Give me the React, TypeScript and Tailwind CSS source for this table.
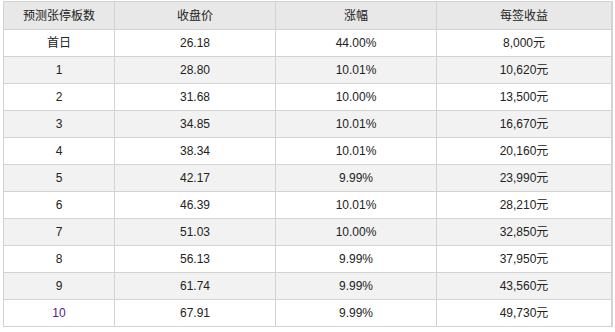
import React from "react";

const rows: [string, string, string, string][] = [
  ["首日", "26.18", "44.00%", "8,000元"],
  ["1", "28.80", "10.01%", "10,620元"],
  ["2", "31.68", "10.00%", "13,500元"],
  ["3", "34.85", "10.01%", "16,670元"],
  ["4", "38.34", "10.01%", "20,160元"],
  ["5", "42.17", "9.99%", "23,990元"],
  ["6", "46.39", "10.01%", "28,210元"],
  ["7", "51.03", "10.00%", "32,850元"],
  ["8", "56.13", "9.99%", "37,950元"],
  ["9", "61.74", "9.99%", "43,560元"],
  ["10", "67.91", "9.99%", "49,730元"],
];

const headers = ["预测张停板数", "收盘价", "涨幅", "每签收益"];

export default function App() {
  return (
    <div
      className="w-[615px] h-[332px] bg-white pt-[1px] pl-[3px] text-[12px] text-[#222]"
      style={{ fontFamily: '"Liberation Sans", Arial, "Noto Sans CJK SC", sans-serif' }}
    >
      <div className="w-[610px] border-l border-t border-[#d3d3d3]">
        <div className="grid grid-cols-[111px_161px_161px_176px] h-[28px] bg-[#e8e8e8]">
          {headers.map((h, i) => (
            <div
              key={i}
              className={`flex items-center justify-center border-b border-[#d3d3d3] ${
                i === 3 ? "border-r-2" : "border-r"
              } text-[#222]`}
            >
              {h}
            </div>
          ))}
        </div>
        {rows.map((r, ri) => (
          <div
            key={ri}
            className={`grid grid-cols-[111px_161px_161px_176px] h-[27px] ${
              ri % 2 === 1 ? "bg-[#f2f2f2]" : "bg-white"
            }`}
          >
            {r.map((c, ci) => (
              <div
                key={ci}
                className={`flex items-center justify-center border-b border-[#d3d3d3] ${
                  ci === 3 ? "border-r-2" : "border-r"
                } ${ri === 10 && ci === 0 ? "text-[#551a8b]" : ""}`}
              >
                {c}
              </div>
            ))}
          </div>
        ))}
      </div>
    </div>
  );
}
